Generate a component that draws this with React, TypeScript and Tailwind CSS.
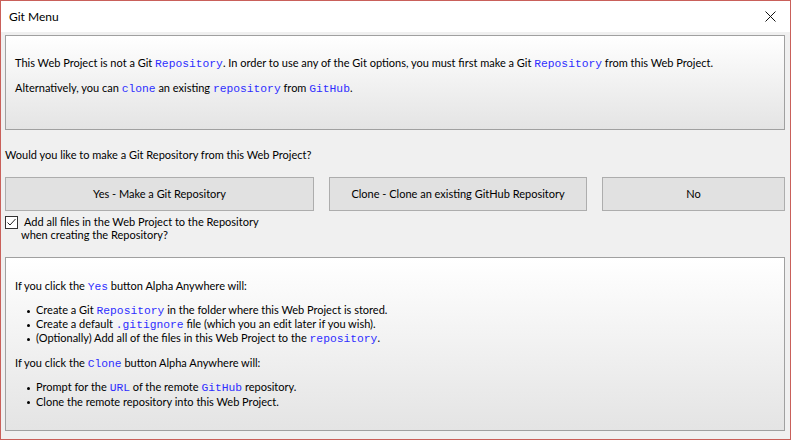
import React from 'react';

const ui = { fontFamily: 'Lato, "Liberation Sans", sans-serif' };
const mono = { fontFamily: '"Liberation Mono", "Courier New", monospace' };

function Code({ children }: { children: React.ReactNode }) {
  return (
    <span className="text-[11.3px] text-[#2e2eff]" style={mono}>
      {children}
    </span>
  );
}

function Bullet({ children }: { children: React.ReactNode }) {
  return (
    <li className="flex items-center h-[14px]">
      <span className="w-[3px] h-[3px] rounded-full bg-black ml-[12px] mr-[6px]" />
      <span>{children}</span>
    </li>
  );
}

export default function App() {
  return (
    <div
      className="w-[791px] h-[440px] border border-[#c9605a] flex flex-col text-[11px] text-black"
      style={ui}
    >
      {/* Title bar */}
      <div className="h-[31px] bg-white flex items-center justify-between pl-[8px] pr-[12px] shrink-0">
        <span className="text-[12px]">Git Menu</span>
        <svg width="11" height="11" viewBox="0 0 11 11" className="mr-[2px]">
          <path d="M0.5 0.5 L10.5 10.5 M10.5 0.5 L0.5 10.5" stroke="#111" strokeWidth="1" fill="none" />
        </svg>
      </div>

      {/* Body */}
      <div className="flex-1 bg-[#f0f0f0] pl-[4px] pr-[5px] pt-[3px] pb-[8px] flex flex-col">
        <div className="h-[95px] border border-[#a0a0a0] bg-gradient-to-b from-white to-[#e4e4e4] px-[9px] pt-[19px]">
          <p className="leading-[16px]">
            This Web Project is not a Git <Code>Repository</Code>. In order to use any of the Git options, you must first make a Git <Code>Repository</Code> from this Web Project.
          </p>
          <p className="leading-[16px] mt-[8px]">
            Alternatively, you can <Code>clone</Code> an existing <Code>repository</Code> from <Code>GitHub</Code>.
          </p>
        </div>

        <p className="leading-[16px] mt-[17px]">Would you like to make a Git Repository from this Web Project?</p>

        <div className="flex gap-[15px] mt-[14px]">
          <button className="w-[309px] h-[34px] bg-[#e1e1e1] border border-[#adadad] text-[11px]">Yes - Make a Git Repository</button>
          <button className="w-[258px] h-[34px] bg-[#e1e1e1] border border-[#adadad] text-[11px]">Clone - Clone an existing GitHub Repository</button>
          <button className="flex-1 h-[34px] bg-[#e1e1e1] border border-[#adadad] text-[11px]">No</button>
        </div>

        <div className="flex items-start mt-[4px]">
          <div className="w-[13px] h-[13px] border border-[#333] bg-white flex items-center justify-center mt-[1px] shrink-0">
            <svg width="11" height="11" viewBox="0 0 11 11">
              <path d="M1.5 5.5 L4 8 L9.5 2" stroke="#222" strokeWidth="1" fill="none" />
            </svg>
          </div>
          <div className="ml-[3px] leading-[13px]">
            <div className="pl-[3px]">Add all files in the Web Project to the Repository</div>
            <div>when creating the Repository?</div>
          </div>
        </div>

        <div className="mt-[16px] flex-1 border border-[#a0a0a0] bg-gradient-to-b from-white to-[#e4e4e4] px-[9px] pt-[20px]">
          <p className="leading-[16px]">If you click the <Code>Yes</Code> button Alpha Anywhere will:</p>
          <ul className="mt-[9px]">
            <Bullet>Create a Git <Code>Repository</Code> in the folder where this Web Project is stored.</Bullet>
            <Bullet>Create a default <Code>.gitignore</Code> file (which you an edit later if you wish).</Bullet>
            <Bullet>(Optionally) Add all of the files in this Web Project to the <Code>repository</Code>.</Bullet>
          </ul>
          <p className="leading-[16px] mt-[9px]">If you click the <Code>Clone</Code> button Alpha Anywhere will:</p>
          <ul className="mt-[9px]">
            <Bullet>Prompt for the <Code>URL</Code> of the remote <Code>GitHub</Code> repository.</Bullet>
            <Bullet>Clone the remote repository into this Web Project.</Bullet>
          </ul>
        </div>
      </div>
    </div>
  );
}
